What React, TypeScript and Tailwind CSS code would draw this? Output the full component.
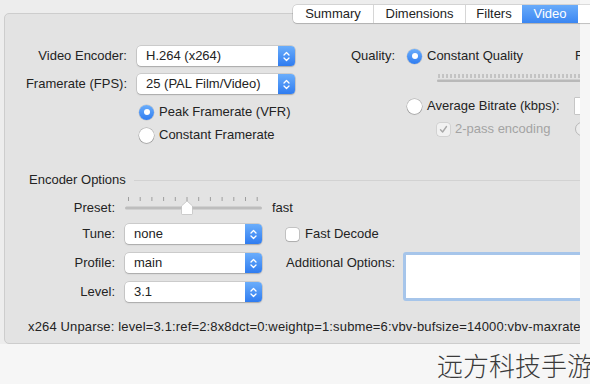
import React from "react";

const Stepper = () => (
  <div className="w-[17px] shrink-0 rounded-r-[4px] bg-gradient-to-b from-[#6aadfb] to-[#2f7cf0] flex items-center justify-center">
    <svg width="7" height="11" viewBox="0 0 7 11" fill="none" stroke="white" strokeWidth="1.3" strokeLinecap="round" strokeLinejoin="round">
      <path d="M1 4 3.5 1.5 6 4" />
      <path d="M1 7 3.5 9.5 6 7" />
    </svg>
  </div>
);

const Popup = ({ value, width }: { value: string; width: string }) => (
  <div className={`${width} h-5 flex bg-white rounded-[4px] shadow-[0_0_0_0.5px_rgba(0,0,0,0.2),0_1px_1.5px_rgba(0,0,0,0.18)]`}>
    <span className="flex-1 pl-[9px] leading-5 whitespace-nowrap">{value}</span>
    <Stepper />
  </div>
);

const Radio = ({ on = false }: { on?: boolean }) =>
  on ? (
    <span className="w-[15px] h-[15px] shrink-0 rounded-full bg-gradient-to-b from-[#6aadfb] to-[#2f7cf0] flex items-center justify-center shadow-[0_0_0_0.5px_rgba(0,0,0,0.15)]">
      <span className="w-[6px] h-[6px] rounded-full bg-white" />
    </span>
  ) : (
    <span className="w-[15px] h-[15px] shrink-0 rounded-full bg-white shadow-[0_0_0_0.5px_rgba(0,0,0,0.28),0_1px_1px_rgba(0,0,0,0.12)]" />
  );

const Checkbox = ({ checked = false, disabled = false }: { checked?: boolean; disabled?: boolean }) => (
  <span
    className={`w-[13px] h-[13px] shrink-0 rounded-[3px] flex items-center justify-center ${
      disabled ? "bg-[#f1f1f1] shadow-[0_0_0_0.5px_rgba(0,0,0,0.15)]" : "bg-white shadow-[0_0_0_0.5px_rgba(0,0,0,0.28),0_1px_1px_rgba(0,0,0,0.12)]"
    }`}
  >
    {checked && (
      <svg width="9" height="9" viewBox="0 0 9 9" fill="none" stroke={disabled ? "#a8a8a8" : "#333"} strokeWidth="1.4" strokeLinecap="round" strokeLinejoin="round">
        <path d="M1.5 4.8 3.6 7 7.5 1.5" />
      </svg>
    )}
  </span>
);

const QualityTicks = () => (
  <svg width="150" height="9" className="block">
    {Array.from({ length: 37 }).map((_, i) => (
      <line key={i} x1={2 + i * 4} y1="0" x2={2 + i * 4} y2="4" stroke="#a4a4a4" strokeWidth="1" />
    ))}
    <rect x="0" y="5.5" width="150" height="2.5" rx="1" fill="#b9b9b9" />
  </svg>
);

const PresetSlider = () => (
  <svg width="137" height="20" className="block overflow-visible">
    {Array.from({ length: 12 }).map((_, i) => (
      <line key={i} x1={3.5 + i * 11.7} y1="-1" x2={3.5 + i * 11.7} y2="3" stroke="#9e9e9e" strokeWidth="1" />
    ))}
    <rect x="0" y="8.5" width="137" height="3" rx="1.5" fill="#bdbdbd" />
    <path d="M56.5 8 62 3 67.5 8 67.5 15.5 Q67.5 16.5 66.5 16.5 L57.5 16.5 Q56.5 16.5 56.5 15.5 Z" fill="white" stroke="#b4b4b4" strokeWidth="0.6" />
  </svg>
);

const tabs = [
  { label: "Summary", w: "w-[80px]" },
  { label: "Dimensions", w: "w-[92px]" },
  { label: "Filters", w: "w-[57px]" },
  { label: "Video", w: "w-[56px]", active: true },
  { label: "", w: "w-[40px]" },
];

const Tabs = () => (
  <div className="absolute top-[5px] left-[293px] flex h-[18px] rounded-[4px] bg-white shadow-[0_0_0_0.5px_rgba(0,0,0,0.22),0_1px_1px_rgba(0,0,0,0.12)]">
    {tabs.map((t, i) => (
      <div
        key={i}
        className={`${t.w} flex items-center justify-center leading-[18px] ${
          t.active ? "bg-gradient-to-b from-[#68abfa] to-[#3a86f2] text-white" : i > 0 && !tabs[i - 1].active ? "border-l border-[#d6d6d6]" : ""
        } ${i === 0 ? "rounded-l-[4px]" : ""}`}
      >
        {t.label}
      </div>
    ))}
  </div>
);

export default function App() {
  return (
    <div className="relative w-[590px] h-[384px] overflow-hidden bg-[#f6f6f6] font-['Liberation_Sans',Arial,sans-serif] text-[13px] text-[#232323]">
      <div className="w-[580px] h-[344px] overflow-hidden bg-[#ededed] pt-[13px] pl-[4px]">
        <div className="w-[660px] h-[331px] rounded-[5px] border border-[#cdcdcd] bg-[#e3e3e3]">
          <div className="flex">
            <div className="w-[296px] shrink-0 pt-[32px]">
              <div className="flex items-center h-5">
                <span className="w-[122px] text-right">Video Encoder:</span>
                <div className="ml-[10px]">
                  <Popup value="H.264 (x264)" width="w-[158px]" />
                </div>
              </div>
              <div className="flex items-center h-5 mt-2">
                <span className="w-[122px] text-right">Framerate (FPS):</span>
                <div className="ml-[10px]">
                  <Popup value="25 (PAL Film/Video)" width="w-[158px]" />
                </div>
              </div>
              <div className="flex items-center h-4 mt-[10px] pl-[134px]">
                <Radio on />
                <span className="ml-[5px]">Peak Framerate (VFR)</span>
              </div>
              <div className="flex items-center h-4 mt-[7px] pl-[134px]">
                <Radio />
                <span className="ml-[5px]">Constant Framerate</span>
              </div>
            </div>
            <div className="flex-1 pt-[32px]">
              <div className="flex items-center h-5 whitespace-nowrap">
                <span className="w-[94px] shrink-0 text-right">Quality:</span>
                <span className="ml-[12px]">
                  <Radio on />
                </span>
                <span className="ml-[5px] w-[148px] shrink-0">Constant Quality</span>
                <span>RF:</span>
              </div>
              <div className="ml-[136px] mt-[8px]">
                <QualityTicks />
              </div>
              <div className="flex items-center h-4 mt-[15px] pl-[106px] whitespace-nowrap">
                <Radio />
                <span className="ml-[5px] w-[148px] shrink-0">Average Bitrate (kbps):</span>
                <span className="w-[40px] h-[16px] shrink-0 bg-white shadow-[0_0_0_0.5px_rgba(0,0,0,0.25)]" />
              </div>
              <div className="flex items-center h-4 mt-[7px] pl-[136px] whitespace-nowrap">
                <Checkbox checked disabled />
                <span className="ml-[5px] w-[120px] shrink-0 text-[#a3a3a3]">2-pass encoding</span>
                <span className="w-[14px] h-[14px] rounded-full border border-[#b8b8b8] bg-[#ececec]" />
              </div>
            </div>
          </div>

          <div className="flex items-center h-4 mt-[29px] pl-[24px]">
            <span>Encoder Options</span>
            <div className="flex-1 ml-[8px] h-px bg-[#d2d2d2]" />
          </div>

          <div className="flex items-center h-5 mt-[10px]">
            <span className="w-[110px] text-right">Preset:</span>
            <div className="ml-[10px]">
              <PresetSlider />
            </div>
            <span className="ml-[10px]">fast</span>
          </div>

          <div className="flex items-center h-5 mt-[6px]">
            <span className="w-[110px] text-right">Tune:</span>
            <div className="ml-[10px]">
              <Popup value="none" width="w-[137px]" />
            </div>
            <span className="ml-[24px]">
              <Checkbox />
            </span>
            <span className="ml-[6px]">Fast Decode</span>
          </div>

          <div className="flex items-start mt-[9px]">
            <div className="flex flex-col">
              <div className="flex items-center h-5">
                <span className="w-[110px] text-right">Profile:</span>
                <div className="ml-[10px]">
                  <Popup value="main" width="w-[137px]" />
                </div>
              </div>
              <div className="flex items-center h-5 mt-[9px]">
                <span className="w-[110px] text-right">Level:</span>
                <div className="ml-[10px]">
                  <Popup value="3.1" width="w-[137px]" />
                </div>
              </div>
            </div>
            <div className="flex items-start ml-[24px]">
              <span className="w-[109px] text-right leading-5 whitespace-nowrap">Additional Options:</span>
              <div className="ml-[8px] -mt-px w-[200px] h-[49px] rounded-[3px] bg-white border-[3px] border-[#a6c5ea]" />
            </div>
          </div>

          <div className="h-4 leading-4 mt-[17px] pl-[23px] whitespace-nowrap tracking-[0.15px]">
            x264 Unparse: level=3.1:ref=2:8x8dct=0:weightp=1:subme=6:vbv-bufsize=14000:vbv-maxrate=14000
          </div>
        </div>
      </div>

      <Tabs />

      <div className="h-[40px] flex items-center pl-[437px] whitespace-nowrap font-['Noto_Sans_CJK_SC',sans-serif] font-light text-[26px] text-[#3a3a3a]">
        远方科技手游
      </div>
    </div>
  );
}
